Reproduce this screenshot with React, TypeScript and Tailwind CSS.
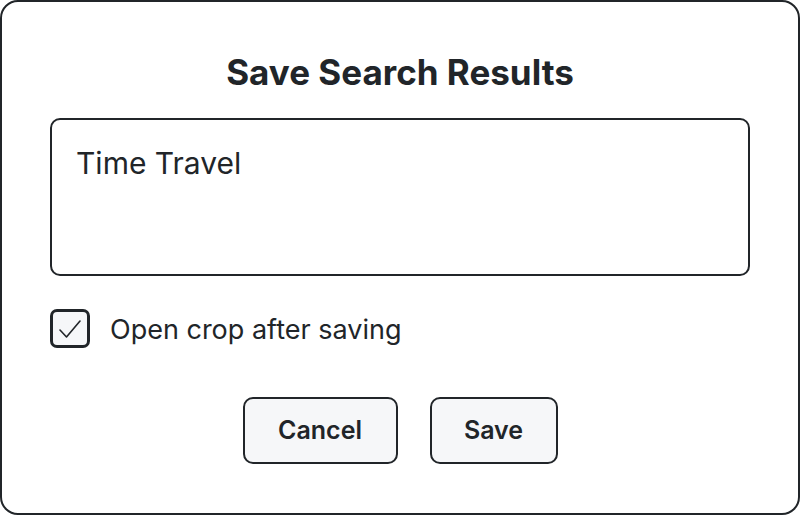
import React from 'react';

const App: React.FC = () => {
  return (
    <div
      className="w-[800px] h-[515px] bg-white border-2 border-[#212529] rounded-[18px] px-[48px] pt-[50px] flex flex-col text-[#212529]"
      style={{ fontFamily: "Inter, 'Noto Sans', sans-serif" }}
    >
      <h1 className="text-[35px] font-bold text-center leading-[40px]">Save Search Results</h1>

      <div className="mt-[26px] h-[158px] border-2 border-[#212529] rounded-[10px] px-[24px] pt-[25px]">
        <p className="text-[30px] leading-[36px]">Time Travel</p>
      </div>

      <label className="mt-[33px] flex items-start gap-[20px]">
        <span className="w-[40px] h-[39px] border-[3px] border-[#212529] rounded-[7px] bg-[#f6f7f9] flex items-center justify-center">
          <svg width="22" height="18" viewBox="0 0 22 18" fill="none" stroke="#212529" strokeWidth="1.6" strokeLinecap="round" strokeLinejoin="round">
            <path d="M1 10l6.5 7L21 1" />
          </svg>
        </span>
        <span className="mt-[5px] text-[27px] leading-[32px]">Open crop after saving</span>
      </label>

      <div className="mt-[49px] flex justify-center gap-[32px]">
        <button className="w-[155px] h-[67px] border-2 border-[#212529] rounded-[10px] bg-[#f6f7f9] text-[25px] font-semibold">
          Cancel
        </button>
        <button className="w-[128px] h-[67px] border-2 border-[#212529] rounded-[10px] bg-[#f6f7f9] text-[25px] font-semibold">
          Save
        </button>
      </div>
    </div>
  );
};

export default App;
